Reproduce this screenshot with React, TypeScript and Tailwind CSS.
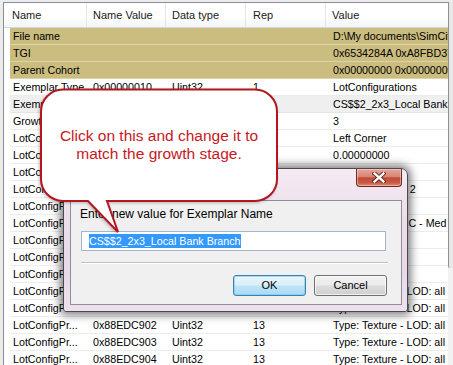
import React from "react";

type Row = { n: string; v?: string; t?: string; r?: string; val: string; tan?: boolean; sel?: boolean };

const rows: Row[] = [
  { n: "File name", val: "D:\\My documents\\SimCity 4\\Plugins\\CS$$2_2x3_Local Bank Branch.SC4Lot", tan: true },
  { n: "TGI", val: "0x6534284A 0xA8FBD372 0x5A3F0000", tan: true },
  { n: "Parent Cohort", val: "0x00000000 0x00000000 0x00000000", tan: true },
  { n: "Exemplar Type", v: "0x00000010", t: "Uint32", r: "1", val: "LotConfigurations" },
  { n: "Exemplar Name", v: "0x00000020", t: "String", r: "1", val: "CS$$2_2x3_Local Bank Branch", sel: true },
  { n: "Growth Stage", v: "0x27812837", t: "Uint8", r: "1", val: "3" },
  { n: "LotConfigPr...", v: "0x88EDC791", t: "Uint8", r: "1", val: "Left Corner" },
  { n: "LotConfigPr...", v: "0x88EDC792", t: "Float32", r: "1", val: "0.00000000" },
  { n: "LotConfigPr...", v: "0x88EDC793", t: "Uint8", r: "1", val: "0x00000000" },
  { n: "LotConfigPr...", v: "0x88EDC790", t: "Uint8", r: "2", val: "Width 3, Depth: 2" },
  { n: "LotConfigPr...", v: "0x88EDC795", t: "Uint8", r: "1", val: "0x00000001" },
  { n: "LotConfigPr...", v: "0x88EDC796", t: "Uint8", r: "1", val: "Commercial - $ C - Med" },
  { n: "LotConfigPr...", v: "0x88EDC797", t: "Uint8", r: "1", val: "0x00000002" },
  { n: "LotConfigPr...", v: "0x88EDC798", t: "Uint8", r: "1", val: "0x00000001" },
  { n: "LotConfigPr...", v: "0x88EDC799", t: "Uint8", r: "1", val: "0x00000000" },
  { n: "LotConfigPr...", v: "0x88EDC900", t: "Uint32", r: "13", val: "Type: Texture - LOD: all" },
  { n: "LotConfigPr...", v: "0x88EDC901", t: "Uint32", r: "13", val: "Type: Texture - LOD: all" },
  { n: "LotConfigPr...", v: "0x88EDC902", t: "Uint32", r: "13", val: "Type: Texture - LOD: all" },
  { n: "LotConfigPr...", v: "0x88EDC903", t: "Uint32", r: "13", val: "Type: Texture - LOD: all" },
  { n: "LotConfigPr...", v: "0x88EDC904", t: "Uint32", r: "13", val: "Type: Texture - LOD: all" },
  { n: "LotConfigPr...", v: "0x88EDC905", t: "Uint32", r: "13", val: "Type: Texture - LOD: all" },
];

const cols = "grid grid-cols-[77px_79px_80px_80px_1fr]";

function Header() {
  const cell = "flex items-center whitespace-nowrap overflow-hidden border-r border-[#e3e6ea]";
  return (
    <div className={`${cols} h-[25px] pl-[6px] border-b border-[#d5d7da] bg-[linear-gradient(180deg,#ffffff_0%,#ffffff_55%,#f4f5f7_100%)] text-[11px] text-[#1a1a1a]`}>
      <div className={`${cell} pl-[2px]`}>Name</div>
      <div className={`${cell} pl-[6px]`}>Name Value</div>
      <div className={`${cell} pl-[6px]`}>Data type</div>
      <div className={`${cell} pl-[7px]`}>Rep</div>
      <div className="flex items-center pl-[6px] whitespace-nowrap overflow-hidden">Value</div>
    </div>
  );
}

function ListRow({ row }: { row: Row }) {
  const bg = row.tan
    ? "bg-[#cbbc7f] border-[#ddd3a6]"
    : row.sel
    ? "bg-[#efefef] border-[#e4e4e4]"
    : "bg-white border-[#ececec]";
  const cell = "flex items-center whitespace-nowrap overflow-hidden";
  return (
    <div className={`${cols} ml-[6px] h-[17px] border-b ${bg} text-[10.7px] text-black`}>
      <div className={`${cell} pl-[3px]`}>{row.n}</div>
      <div className={`${cell} pl-[6px]`}>{row.v ?? ""}</div>
      <div className={`${cell} pl-[6px]`}>{row.t ?? ""}</div>
      <div className={`${cell} pl-[7px]`}>{row.r ?? ""}</div>
      <div className={`${cell} pl-[7px]`}>{row.val}</div>
    </div>
  );
}

function Dialog() {
  return (
    <div className="absolute left-[63px] top-[168px] w-[345px] rounded-t-[7px] rounded-b-[3px] border border-[#4b4852] pt-[31px] pl-[6px] pr-[5px] pb-[6px] bg-[linear-gradient(180deg,#f4ebf3_0%,#ecdeea_35%,#e9d9e7_70%,#eee1ec_100%)] shadow-[0_0_9px_3px_rgba(0,0,0,0.5)]">
      {/* close button */}
      <div className="absolute top-0 right-[5px] w-[46px] h-[18px] rounded-b-[4px] border border-t-0 border-[#6e2b25] bg-[linear-gradient(180deg,#e6a899_0%,#d88474_45%,#c24a36_52%,#c85a45_80%,#dc8a70_100%)] flex items-center justify-center shadow-[inset_0_0_0_1px_rgba(255,220,210,0.5)]">
        <svg width="14" height="11" viewBox="0 0 14 11">
          <path d="M2.5 1.5 L11.5 9.5 M11.5 1.5 L2.5 9.5" stroke="#5a1c16" strokeWidth="4.2" strokeLinecap="square" />
          <path d="M2.5 1.5 L11.5 9.5 M11.5 1.5 L2.5 9.5" stroke="#ffffff" strokeWidth="2.4" strokeLinecap="square" />
        </svg>
      </div>
      <div className="border border-[#8f8e98] bg-[#f0f0f0] pt-[6px] pb-[8px]">
        <div className="pl-[9px] text-[12px] leading-[15px] text-black whitespace-nowrap">Enter new value for Exemplar Name</div>
        <div className="ml-[10px] mt-[9px] w-[305px] h-[20px] border border-[#a3b7cc] bg-white flex items-center pl-[7px]">
          <span className="bg-[#3399ff] text-white text-[10.7px] leading-[14px] whitespace-nowrap">CS$$2_2x3_Local Bank Branch</span>
        </div>
        <div className="ml-[10px] mt-[11px] w-[307px] border-t border-b border-t-[#c2c2c2] border-b-white" />
        <div className="mt-[11px] flex justify-end gap-[8px] pr-[14px]">
          <div className="w-[73px] h-[21px] rounded-[3px] border border-[#3c7fb1] bg-[linear-gradient(180deg,#e9f5fc_0%,#d9effb_48%,#bfe5f9_52%,#a9daf4_100%)] shadow-[inset_0_0_0_1px_rgba(120,200,240,0.6)] flex items-center justify-center text-[11px] text-black">OK</div>
          <div className="w-[73px] h-[21px] rounded-[3px] border border-[#707070] bg-[linear-gradient(180deg,#f2f2f2_0%,#ebebeb_48%,#dddddd_52%,#cfcfcf_100%)] shadow-[inset_0_0_0_1px_rgba(255,255,255,0.7)] flex items-center justify-center text-[11px] text-black">Cancel</div>
        </div>
      </div>
    </div>
  );
}

function Callout() {
  return (
    <div className="absolute left-[40px] top-[88px] w-[238px] h-[146px]">
      <svg className="absolute inset-0 drop-shadow-[-1px_1px_1.5px_rgba(0,0,0,0.25)]" width="238" height="146" viewBox="0 0 238 146">
        <path
          d="M23 1.5 H215 A22 22 0 0 1 237 23.5 V91 A22 22 0 0 1 215 113 H67 L78 144 L48 113 H23 A22 22 0 0 1 1 91 V23.5 A22 22 0 0 1 23 1.5 Z"
          fill="#ffffff"
          stroke="#b3161e"
          strokeWidth="2"
          strokeLinejoin="miter"
        />
      </svg>
      <div className="relative pt-[39px] text-center text-[15.5px] leading-[18px] text-[#c8171e]">
        Click on this and change it to
        <br />
        match the growth stage.
      </div>
    </div>
  );
}

export default function App() {
  return (
    <div className="relative w-[453px] h-[365px] overflow-hidden bg-[#ececec] pt-[2px] pl-[3px] font-['Liberation_Sans',Arial,sans-serif]">
      <div className="flex h-full">
        <div className="flex-1 min-w-0 border-l border-t border-[#8a8d93] bg-white overflow-hidden">
          <Header />
          {rows.map((r, i) => (
            <ListRow key={i} row={r} />
          ))}
        </div>
        <div className="w-[5px] flex flex-col">
          <div className="h-[266px] border-l border-[#8e8e8e] bg-[#e8e8e8] rounded-bl-[2px]" />
          <div className="flex-1 bg-[#f2f2f2]" />
        </div>
      </div>
      <Dialog />
      <Callout />
    </div>
  );
}
